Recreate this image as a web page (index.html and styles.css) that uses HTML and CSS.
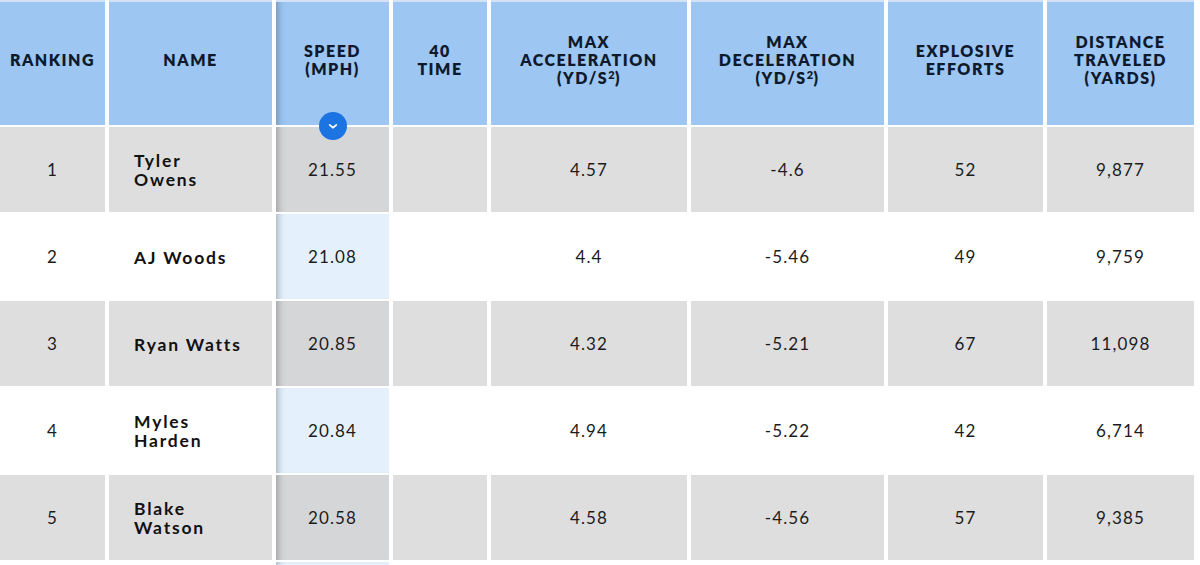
FILE: index.html
```html
<!DOCTYPE html>
<html lang="en">
<head>
<meta charset="utf-8">
<title>Speed Rankings</title>
<link rel="stylesheet" href="styles.css">
</head>
<body>
<div class="table">
  <div class="row head">
    <div class="cell"><span class="label">RANKING</span></div>
    <div class="cell"><span class="label">NAME</span></div>
    <div class="cell speed"><span class="label">SPEED<br>(MPH)</span><span class="sort"><svg viewBox="0 0 12 8" width="10" height="7"><path d="M2 2 L6 5.5 L10 2" fill="none" stroke="#fff" stroke-width="2" stroke-linecap="round" stroke-linejoin="round"/></svg></span></div>
    <div class="cell"><span class="label">40<br>TIME</span></div>
    <div class="cell"><span class="label">MAX<br>ACCELERATION<br>(YD/S<sup class="sq">2</sup>)</span></div>
    <div class="cell"><span class="label">MAX<br>DECELERATION<br>(YD/S<sup class="sq">2</sup>)</span></div>
    <div class="cell"><span class="label">EXPLOSIVE<br>EFFORTS</span></div>
    <div class="cell"><span class="label">DISTANCE<br>TRAVELED<br>(YARDS)</span></div>
  </div>
  <div class="row alt">
    <div class="cell">1</div>
    <div class="cell name">Tyler<br>Owens</div>
    <div class="cell speed">21.55</div>
    <div class="cell"></div>
    <div class="cell">4.57</div>
    <div class="cell">-4.6</div>
    <div class="cell">52</div>
    <div class="cell">9,877</div>
  </div>
  <div class="row">
    <div class="cell">2</div>
    <div class="cell name">AJ Woods</div>
    <div class="cell speed">21.08</div>
    <div class="cell"></div>
    <div class="cell">4.4</div>
    <div class="cell">-5.46</div>
    <div class="cell">49</div>
    <div class="cell">9,759</div>
  </div>
  <div class="row alt">
    <div class="cell">3</div>
    <div class="cell name">Ryan Watts</div>
    <div class="cell speed">20.85</div>
    <div class="cell"></div>
    <div class="cell">4.32</div>
    <div class="cell">-5.21</div>
    <div class="cell">67</div>
    <div class="cell">11,098</div>
  </div>
  <div class="row">
    <div class="cell">4</div>
    <div class="cell name">Myles<br>Harden</div>
    <div class="cell speed">20.84</div>
    <div class="cell"></div>
    <div class="cell">4.94</div>
    <div class="cell">-5.22</div>
    <div class="cell">42</div>
    <div class="cell">6,714</div>
  </div>
  <div class="row alt">
    <div class="cell">5</div>
    <div class="cell name">Blake<br>Watson</div>
    <div class="cell speed">20.58</div>
    <div class="cell"></div>
    <div class="cell">4.58</div>
    <div class="cell">-4.56</div>
    <div class="cell">57</div>
    <div class="cell">9,385</div>
  </div>
  <div class="row">
    <div class="cell"></div>
    <div class="cell name"></div>
    <div class="cell speed"></div>
    <div class="cell"></div>
    <div class="cell"></div>
    <div class="cell"></div>
    <div class="cell"></div>
    <div class="cell"></div>
  </div>
</div>
</body>
</html>
```

FILE: styles.css
```css
* { box-sizing: border-box; }

body {
  margin: 0;
  background: #ffffff;
  font-family: Lato, "Open Sans", Arial, sans-serif;
  color: #1c1c1e;
}

.table {
  width: 1194px;
  display: flex;
  flex-direction: column;
  gap: 2px;
}

.row {
  display: grid;
  grid-template-columns: 105px 163px 113px 94px 196px 193px 155px 147px;
  column-gap: 4px;
  height: 85px;
}

.cell {
  display: flex;
  align-items: center;
  justify-content: center;
  text-align: center;
  background: #ffffff;
  font-size: 17px;
  letter-spacing: 1.1px;
}

.row.alt .cell {
  background: #dedede;
}

.cell.speed {
  position: relative;
  background: #e4f1fd;
  box-shadow: inset 9px 0 7px -7px rgba(0, 0, 0, 0.28);
}

.row.alt .cell.speed {
  background: #d5d6d8;
}

.cell.name {
  justify-content: flex-start;
  text-align: left;
  padding-left: 25px;
  padding-top: 1px;
  font-weight: 700;
  font-size: 17.5px;
  line-height: 19px;
  letter-spacing: 1.8px;
  color: #111;
}

.head {
  height: 125px;
}

.head .cell {
  background: #9dc6f3;
  border-top: 2px solid #d3e3f5;
  color: #0e1a2c;
  font-weight: 800;
  font-size: 16px;
  line-height: 18px;
  letter-spacing: 1.5px;
  padding-bottom: 8px;
}

.label {
  display: block;
}

.head .cell.speed {
  background: #9dc6f3;
  z-index: 2;
}

.sq {
  font-size: 11px;
  line-height: 0;
  vertical-align: 5px;
  letter-spacing: 0.5px;
}

.sort {
  position: absolute;
  left: 50%;
  bottom: -15px;
  width: 28px;
  height: 28px;
  margin-left: -14px;
  border-radius: 50%;
  background: #1c74e3;
  display: flex;
  align-items: center;
  justify-content: center;
}
```
